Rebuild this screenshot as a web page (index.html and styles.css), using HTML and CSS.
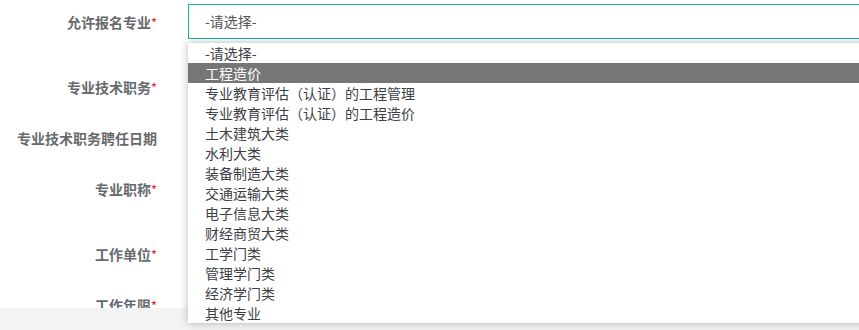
FILE: index.html
```html
<!DOCTYPE html>
<html lang="zh-CN">
<head>
<meta charset="utf-8">
<title>表单</title>
<link rel="stylesheet" href="styles.css">
</head>
<body>
<div class="page">
  <form class="form">
    <div class="row row-tall">
      <label class="label">允许报名专业<span class="req">*</span></label>
      <div class="control">
        <div class="select">-请选择-</div>
      </div>
    </div>
    <div class="row">
      <label class="label">专业技术职务<span class="req">*</span></label>
    </div>
    <div class="row">
      <label class="label">专业技术职务聘任日期</label>
    </div>
    <div class="row row-tall">
      <label class="label">专业职称<span class="req">*</span></label>
    </div>
    <div class="row">
      <label class="label">工作单位<span class="req">*</span></label>
    </div>
    <div class="row">
      <label class="label">工作年限<span class="req">*</span></label>
    </div>
  </form>
  <div class="footer"></div>
  <ul class="dropdown">
    <li>-请选择-</li>
    <li class="active">工程造价</li>
    <li>专业教育评估（认证）的工程管理</li>
    <li>专业教育评估（认证）的工程造价</li>
    <li>土木建筑大类</li>
    <li>水利大类</li>
    <li>装备制造大类</li>
    <li>交通运输大类</li>
    <li>电子信息大类</li>
    <li>财经商贸大类</li>
    <li>工学门类</li>
    <li>管理学门类</li>
    <li>经济学门类</li>
    <li>其他专业</li>
  </ul>
</div>
</body>
</html>
```
FILE: styles.css
```css
html, body {
  margin: 0;
  padding: 0;
  overflow: hidden;
  background: #ffffff;
  font-family: "Microsoft YaHei", "Noto Sans CJK SC", "Noto Sans", sans-serif;
}

.page {
  position: relative;
  width: 859px;
  height: 330px;
  overflow: hidden;
}

.form {
  padding-top: 4px;
}

.row {
  display: flex;
  height: 51px;
}

.row-tall {
  height: 65px;
}

.label {
  width: 157px;
  flex: none;
  text-align: right;
  padding-top: 8px;
  line-height: 20px;
  font-size: 14px;
  font-weight: bold;
  color: #676a6c;
  height: 20px;
}

.req {
  color: #ed1c24;
  font-weight: normal;
  font-size: 13px;
}

.control {
  flex: 1;
  min-width: 0;
  padding-left: 31px;
}

.select {
  width: 700px;
  height: 33px;
  box-sizing: content-box;
  border: 1px solid #1ab394;
  padding-left: 16px;
  line-height: 33px;
  font-size: 14px;
  color: #555555;
}

.footer {
  position: absolute;
  left: 0;
  right: 0;
  top: 308px;
  height: 22px;
  background: #f3f3f4;
}

.dropdown {
  position: absolute;
  top: 43px;
  left: 188px;
  width: 720px;
  margin: 0;
  padding: 0;
  list-style: none;
  background: #ffffff;
  box-shadow: 0 0 8px rgba(0, 0, 0, 0.28);
}

.dropdown li {
  height: 20px;
  line-height: 20px;
  padding-left: 17px;
  font-size: 14px;
  color: #3c4045;
}

.dropdown li.active {
  background: #767676;
  color: #ffffff;
}
```
